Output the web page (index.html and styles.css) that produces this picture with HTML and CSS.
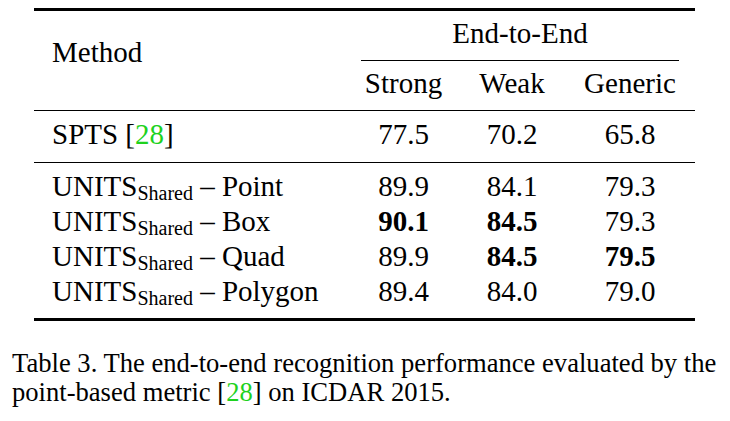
FILE: index.html
```html
<!DOCTYPE html>
<html>
<head>
<meta charset="utf-8">
<link rel="stylesheet" href="styles.css">
</head>
<body>
<div class="table">
  <div class="rule thick"></div>
  <div class="head">
    <div class="method">Method</div>
    <div class="group-title">End-to-End</div>
    <div class="cmid"></div>
    <div class="cell">Strong</div>
    <div class="cell">Weak</div>
    <div class="cell">Generic</div>
  </div>
  <div class="rule thin"></div>
  <div class="body first">
    <div class="name">SPTS [<span class="cite">28</span>]</div>
    <div class="cell">77.5</div><div class="cell">70.2</div><div class="cell">65.8</div>
  </div>
  <div class="rule thin"></div>
  <div class="body second">
    <div class="name">UNITS<sub>Shared</sub> – Point</div>
    <div class="cell">89.9</div><div class="cell">84.1</div><div class="cell">79.3</div>
    <div class="name">UNITS<sub>Shared</sub> – Box</div>
    <div class="cell"><b>90.1</b></div><div class="cell"><b>84.5</b></div><div class="cell">79.3</div>
    <div class="name">UNITS<sub>Shared</sub> – Quad</div>
    <div class="cell">89.9</div><div class="cell"><b>84.5</b></div><div class="cell"><b>79.5</b></div>
    <div class="name">UNITS<sub>Shared</sub> – Polygon</div>
    <div class="cell">89.4</div><div class="cell">84.0</div><div class="cell">79.0</div>
  </div>
  <div class="rule bottom"></div>
</div>
<p class="caption">Table 3. The end-to-end recognition performance evaluated by the<br>point-based metric [<span class="cite">28</span>] on ICDAR 2015.</p>
</body>
</html>
```
FILE: styles.css
```css
html, body {
  margin: 0;
  padding: 0;
  background: #fff;
}
body {
  padding: 8px 0 0 34px;
  font-family: "Liberation Serif", "Times New Roman", serif;
  color: #000;
}
.table {
  width: 661px;
  font-size: 29px;
  line-height: 35px;
}
.rule { background: #000; }
.rule.thick { height: 3px; }
.rule.thin { height: 1px; }
.rule.bottom { height: 3px; }

.head, .body {
  display: grid;
  grid-template-columns: 314px 111px 106px 130px;
}
.head {
  padding: 5px 0 9px;
  grid-template-rows: 35px 15px 35px;
}
.method {
  grid-column: 1;
  grid-row: 1 / 4;
  padding-left: 18px;
  margin-top: 19px;
}
.group-title {
  grid-column: 2 / 5;
  grid-row: 1;
  text-align: center;
  padding-right: 3px;
}
.cmid {
  grid-column: 2 / 5;
  grid-row: 2;
  margin: 9px 16px 5px 13px;
  height: 1px;
  background: #000;
}
.cell {
  text-align: center;
  white-space: nowrap;
}
.name {
  padding-left: 18px;
  white-space: nowrap;
}
.body.first { padding: 6px 0 10px; }
.body.second { padding: 6px 0 9px; }
sub {
  font-size: 20px;
  vertical-align: -4px;
  line-height: 0;
}
b { font-weight: bold; }
.cite { color: #1ed21e; }
.caption {
  margin: 0;
  margin-left: -22px;
  margin-top: 28px;
  font-size: 26.6px;
  line-height: 29px;
  white-space: nowrap;
}
```
